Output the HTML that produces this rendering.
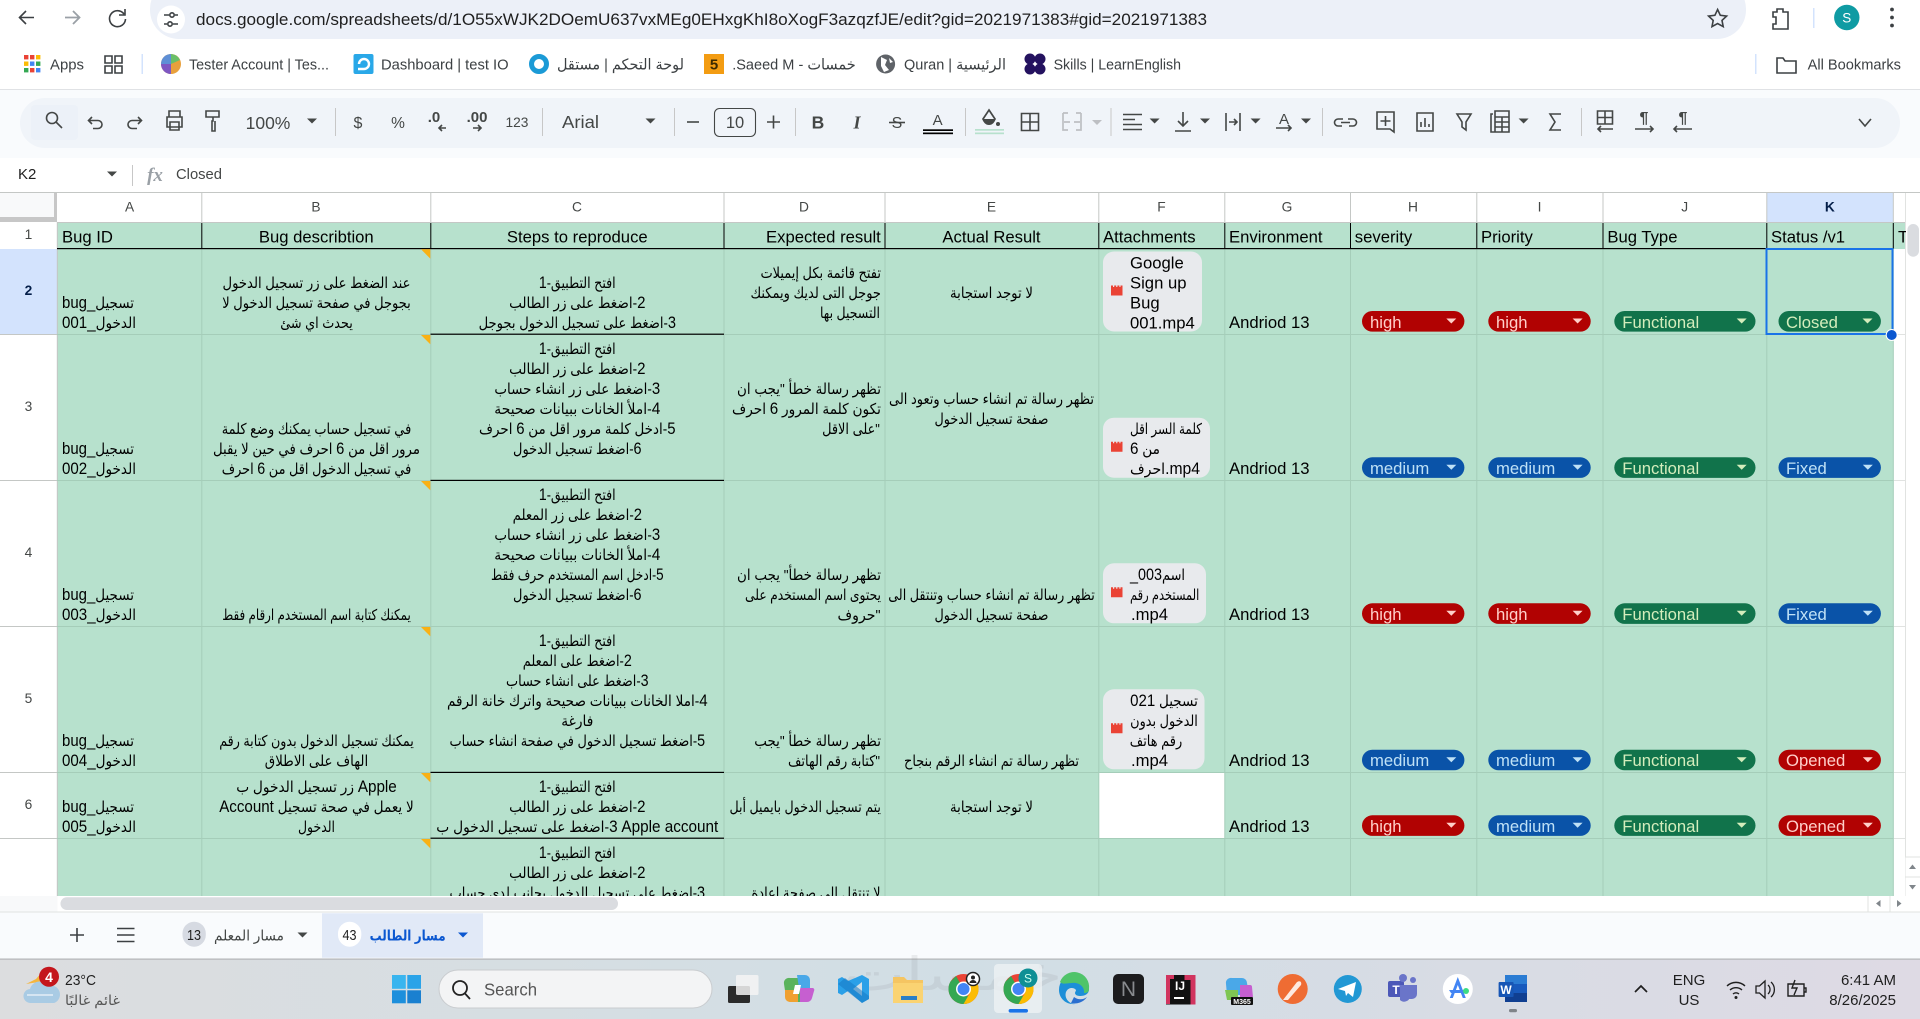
<!DOCTYPE html>
<html lang="en"><head><meta charset="utf-8"><title>Sheet</title>
<style>
html,body{margin:0;padding:0;background:#fff;overflow:hidden}
svg{display:block}
text{font-family:"Liberation Sans","DejaVu Sans",sans-serif;white-space:pre}
.c{font-size:16.67px;fill:#000}
.a{font-size:15px;fill:#000;direction:rtl;text-anchor:middle}
.l{font-size:15px;fill:#000;text-anchor:middle}
.n{font-size:16.67px}
.m{text-anchor:middle}
.h{font-size:13.75px;fill:#444746;text-anchor:middle}
.b{font-size:15px;fill:#3c4043}
.ti{font-size:15px;fill:#444746;text-anchor:middle}
.rd{font-size:16.67px;fill:#ffcfc9}.bl{font-size:16.67px;fill:#bfe1f6}.gr{font-size:16.67px;fill:#d4edbc}
.s{fill:none;stroke:#444746;stroke-width:1.6}
.sd{fill:none;stroke:#3c4043;stroke-width:1.6}
.k{fill:#444746}
</style></head><body>
<svg xmlns="http://www.w3.org/2000/svg" width="1920" height="1019" viewBox="0 0 1920 1019">
<defs>
<linearGradient id="tb" x1="0" x2="1" y1="0" y2="0"><stop offset="0" stop-color="#dcdddf"/><stop offset=".5" stop-color="#d1dee5"/><stop offset="1" stop-color="#dedae4"/></linearGradient>
<g id="R"><rect width="102.4" height="20.6" rx="10.3" fill="#b10202"/><path d="M84.3 7.5h10l-5 5z" fill="#ffcfc9"/></g>
<g id="B"><rect width="102.4" height="20.6" rx="10.3" fill="#0a53a8"/><path d="M84.3 7.5h10l-5 5z" fill="#bfe1f6"/></g>
<g id="G"><rect width="141.2" height="20.6" rx="10.3" fill="#11734b"/><path d="M122.4 7.5h10l-5 5z" fill="#d4edbc"/></g>
<g id="GS"><rect width="102.4" height="20.6" rx="10.3" fill="#11734b"/><path d="M84 7.5h10l-5 5z" fill="#d4edbc"/></g>
<g id="F"><path d="M0 1.5h11.5v8.5h-11.5z M0 0h2v2h-2z M3.2 0h2v2h-2z M6.4 0h2v2h-2z M9.5 0h2v2h-2z" fill="#ea4335"/></g>
<path id="C" d="M-5 -2.5h10l-5 5z" fill="#444746"/>
<g id="chrome">
<circle r="15" fill="#ea4335"/>
<path d="M-13 7.5A15 15 0 0 1 -13 -7.5L-7.5 -13 0 0 7.5 13A15 15 0 0 1 -13 7.5z" fill="#34a853"/>
<path d="M0 -7.5H13A15 15 0 0 1 0 15L7 3z" fill="#fbbc04"/>
<circle r="7.5" fill="#fff"/><circle r="6" fill="#4285f4"/>
</g>
</defs>

<!-- browser -->
<rect width="1920" height="1019" fill="#fff"/>
<rect x="150" y="-20" width="1596" height="59" rx="29" fill="#ecf0f8"/>
<path class="sd" d="M34 17.5H20M26 11l-6.5 6.5L26 24" stroke-width="1.8"/>
<path d="M65 17.5H79M73 11l6.5 6.5L73 24" fill="none" stroke="#9aa0a6" stroke-width="1.8"/>
<path class="sd" d="M124 14a8 8 0 1 0 1.5 5M125 9v6h-6" stroke-width="1.8"/>
<circle cx="171" cy="19.5" r="14" fill="#fff"/>
<path class="sd" d="M164 15h5M175 15h3M164 24h3M173 24h5"/><circle class="sd" cx="172" cy="15" r="2.2"/><circle class="sd" cx="170" cy="24" r="2.2"/>
<text x="196" y="25" font-size="16.67" fill="#1f1f1f" textLength="1011" lengthAdjust="spacingAndGlyphs">docs.google.com/spreadsheets/d/1O55xWJK2DOemU637vxMEg0EHxgKhI8oXogF3azqzfJE/edit?gid=2021971383#gid=2021971383</text>
<path class="sd" d="M1717.6 9.5l2.7 5.8 6.3.8-4.6 4.3 1.2 6.2-5.6-3.1-5.6 3.1 1.2-6.2-4.6-4.3 6.3-.8z" stroke-width="1.7"/>
<path class="sd" d="M1773 12h4v-3h6v3h5v17h-15v-5h3v-7h-3z" stroke-width="1.8"/>
<rect x="1813" y="8" width="1.5" height="20" fill="#d3e3fd"/>
<circle cx="1846.8" cy="17.5" r="12.7" fill="#0f9ba3"/><text x="1846.8" y="22.5" class="m" font-size="13.5" fill="#fff">S</text>
<circle cx="1892" cy="9.5" r="1.9" fill="#3c4043"/><circle cx="1892" cy="17.5" r="1.9" fill="#3c4043"/><circle cx="1892" cy="25.5" r="1.9" fill="#3c4043"/>

<!-- bookmarks -->
<g>
<rect x="24" y="55" width="4.4" height="4.4" fill="#ea4335"/><rect x="30" y="55" width="4.4" height="4.4" fill="#ea4335"/><rect x="36" y="55" width="4.4" height="4.4" fill="#fbbc04"/>
<rect x="24" y="61.5" width="4.4" height="4.4" fill="#fbbc04"/><rect x="30" y="61.5" width="4.4" height="4.4" fill="#4285f4"/><rect x="36" y="61.5" width="4.4" height="4.4" fill="#34a853"/>
<rect x="24" y="68" width="4.4" height="4.4" fill="#34a853"/><rect x="30" y="68" width="4.4" height="4.4" fill="#ea4335"/><rect x="36" y="68" width="4.4" height="4.4" fill="#4285f4"/>
<text x="50" y="69.5" class="b" textLength="34" lengthAdjust="spacingAndGlyphs">Apps</text>
<path class="sd" d="M105 56h7v7h-7zM115 56h7v7h-7zM105 66h7v7h-7zM115 66h7v7h-7z" stroke-width="1.7"/>
<rect x="141.5" y="54" width="1.5" height="20" fill="#d3e3fd"/>
<circle cx="171" cy="64" r="10" fill="#e8a03c"/><path d="M171 64V54a10 10 0 0 1 9 6z" fill="#6abf69"/><path d="M171 64v10a10 10 0 0 1-10-10z" fill="#7e57c2"/><path d="M171 64h-10a10 10 0 0 1 10-10z" fill="#5e8fd6"/>
<text x="189" y="69.5" class="b" textLength="140" lengthAdjust="spacingAndGlyphs">Tester Account | Tes...</text>
<rect x="353.5" y="54" width="20" height="20" rx="2" fill="#29a8e8"/><path d="M358 69h6a5 5 0 1 0-5-5" fill="none" stroke="#fff" stroke-width="2.4"/>
<text x="381" y="69.5" class="b" textLength="127.6" lengthAdjust="spacingAndGlyphs">Dashboard | test IO</text>
<ellipse cx="539" cy="64" rx="7.5" ry="7.5" fill="none" stroke="#1b9ad6" stroke-width="5"/>
<text x="620.5" y="69.5" class="b m" style="direction:rtl" textLength="127" lengthAdjust="spacingAndGlyphs">لوحة التحكم | مستقل</text>
<rect x="704" y="54" width="20" height="20" fill="#f39c12"/><text x="714" y="69.5" class="m" font-size="15" font-weight="700" fill="#3c2a00">5</text>
<text x="794" y="69.5" class="b m" style="direction:rtl" textLength="123.6" lengthAdjust="spacingAndGlyphs">خمسات - Saeed M.</text>
<circle cx="885.6" cy="64" r="9.5" fill="#5f6368"/><path d="M881 57l6 3-2 5 4 5-5 2-3-6zM889 58l4 4-3 1z" fill="#fff"/>
<text x="955" y="69.5" class="b m" style="direction:rtl" textLength="102" lengthAdjust="spacingAndGlyphs">الرئيسية | Quran</text>
<circle cx="1030" cy="59" r="5.5" fill="#24125f"/><circle cx="1040" cy="59" r="5.5" fill="#24125f"/><circle cx="1030" cy="69" r="5.5" fill="#24125f"/><circle cx="1040" cy="69" r="5.5" fill="#24125f"/>
<text x="1053.6" y="69.5" class="b" textLength="127.4" lengthAdjust="spacingAndGlyphs">Skills | LearnEnglish</text>
<rect x="1755" y="54" width="1.5" height="20" fill="#d3e3fd"/>
<path class="sd" d="M1777 58h6l2 3h11v12h-19z" stroke-width="1.7"/>
<text x="1807.6" y="69.5" class="b" textLength="93.4" lengthAdjust="spacingAndGlyphs">All Bookmarks</text>
</g>
<rect y="89" width="1920" height="1" fill="#e0e2e5"/>

<!-- toolbar -->
<rect y="90" width="1920" height="68" fill="#f9fbfd"/>
<rect x="20" y="98" width="1880" height="50" rx="25" fill="#f0f4f9"/>
<rect x="31" y="105" width="47" height="35" rx="4" fill="#ecf1f8"/>
<circle class="s" cx="52" cy="118" r="5.5"/><path class="s" d="M56 122l6 6" stroke-width="1.8"/>
<path class="s" d="M92 118l-3.5 3.5 3.5 3.5M88.5 121.5H98a4 4 0 0 1 0 8h-5" transform="translate(0,-1)"/>
<path class="s" d="M138 118l3.5 3.5-3.5 3.5M141.500 121.500H132a4 4 0 0 0 0 8h5" transform="translate(0,-1)"/>
<path class="s" d="M169 117v-6h11v6M167 127v-10h15v10zM170 122v8h9v-8z" stroke-width="1.8"/>
<path class="s" d="M206 111h13v6h-13zM213 117v4h-1v10h3v-10" stroke-width="1.8"/>
<text x="268" y="129" class="ti" style="font-size:17.5px">100%</text>
<use href="#C" x="312" y="121"/>
<rect x="335" y="108" width="1" height="28" fill="#c7c7c7"/>
<text x="358" y="128" class="ti" style="font-size:16px">$</text>
<text x="398" y="128" class="ti" style="font-size:15.500px">%</text>
<text x="434" y="122" class="ti" style="font-size:15px;font-weight:700">.0</text>
<path class="s" d="M446 128h-7M442 125l-3 3 3 3"/>
<text x="477" y="122" class="ti" style="font-size:15px;font-weight:700">.00</text>
<path class="s" d="M473 128h8M478 125l3 3-3 3"/>
<text x="517" y="127" class="ti" style="font-size:13.750px">123</text>
<rect x="542" y="108" width="1" height="28" fill="#c7c7c7"/>
<text x="562" y="128" style="font-size:17.500px;fill:#444746" textLength="37" lengthAdjust="spacingAndGlyphs">Arial</text>
<use href="#C" x="650.500" y="121"/>
<rect x="674" y="108" width="1" height="28" fill="#c7c7c7"/>
<path class="s" d="M687 122h12" stroke-width="1.8"/>
<rect x="714.500" y="108.500" width="41" height="28" rx="5" fill="none" stroke="#444746" stroke-width="1.100"/>
<text x="735" y="128" class="ti" style="font-size:16.500px">10</text>
<path class="s" d="M767 122h13M773.500 115.500v13" stroke-width="1.8"/>
<rect x="795" y="108" width="1" height="28" fill="#c7c7c7"/>
<text x="818" y="128.500" class="ti" style="font-size:17.500px;font-weight:700">B</text>
<text x="857" y="128.500" class="ti" style="font-size:18px;font-weight:700;font-style:italic;font-family:'Liberation Serif',serif">I</text>
<text x="897" y="128" class="ti" style="font-size:16px">S</text><path class="s" d="M889 122.500h16"/>
<text x="937.600" y="125" class="ti" style="font-size:15px">A</text>
<rect x="923" y="129.300" width="30" height="1.700" fill="#000"/><rect x="923" y="132.500" width="30" height="1.700" fill="#000"/>
<rect x="965" y="108" width="1" height="28" fill="#c7c7c7"/>
<path d="M989 110l6 9a6.500 6.500 0 0 1-12 0z" fill="none" stroke="#444746" stroke-width="1.7"/><path d="M983 119h12a6 6 0 0 1-12 0z" fill="#444746"/><circle cx="998" cy="124" r="2" fill="#444746"/>
<rect x="975" y="129" width="29" height="1.700" fill="#b7e1cd"/><rect x="975" y="132.500" width="29" height="1.700" fill="#b7e1cd"/>
<path class="s" d="M1021.500 113.500h17v17h-17zM1030 113.500v17M1021.500 122h17" stroke-width="1.7"/>
<path d="M1063 113h5M1076 113h5M1063 113v17h5M1081 113v17h-5M1064 122h6M1080 122h-6" fill="none" stroke="#bdbfc3" stroke-width="1.7"/>
<path d="M1092 120h10l-5 5z" fill="#bdbfc3"/>
<rect x="1110.500" y="108" width="1" height="28" fill="#c7c7c7"/>
<path class="s" d="M1123 114.500h19M1123 119.500h12M1123 124.500h19M1123 129.500h19" stroke-width="1.700"/>
<use href="#C" x="1154.600" y="121"/>
<path class="s" d="M1183 112v14M1178 121l5 5 5-5M1175 131h16" stroke-width="1.700"/>
<use href="#C" x="1205" y="121"/>
<path class="s" d="M1226 113v18M1240 113v18M1229 122h8M1234 119l3 3-3 3" stroke-width="1.700"/>
<use href="#C" x="1255.600" y="121"/>
<text x="1284" y="124" class="ti" style="font-size:15px">A</text><path class="s" d="M1276 128h15M1288 125l3 3-3 3"/>
<use href="#C" x="1306" y="121"/>
<rect x="1322" y="108" width="1" height="28" fill="#c7c7c7"/>
<path class="s" d="M1343 122h-5a3.500 3.500 0 0 0 0 7h4M1348 122h5a3.500 3.500 0 0 1 0 7h-4M1341 125.500h9" transform="translate(0,-3)" stroke-width="1.800"/>
<path class="s" d="M1377 112h17v20l-4-3h-13zM1385.500 116v10M1380.500 121h10" stroke-width="1.700"/>
<path class="s" d="M1417 113h16v18h-16zM1421 127v-5M1425 127v-9M1429 127v-3" stroke-width="1.700"/>
<path class="s" d="M1457 114h14l-5 8v8l-4-3v-5z" stroke-width="1.700"/>
<path class="s" d="M1493 114h-2v18h17M1495 111h14v21h-14zM1495 117h14M1495 122h14M1495 127h14M1502 117v15" stroke-width="1.700"/>
<use href="#C" x="1523.600" y="121"/>
<path class="s" d="M1561 114h-11l5 8-5 8h11" stroke-width="2.200"/>
<rect x="1581" y="108" width="1" height="28" fill="#c7c7c7"/>
<path class="s" d="M1597.500 111h15v13h-15zM1605 111v13M1597.500 117.500h15M1613 129h-15M1601 126l-3 3 3 3" stroke-width="1.700"/>
<text x="1644" y="123" class="ti" style="font-size:16px;font-weight:700">¶</text><path class="s" d="M1635 129h18M1650 126l3 3-3 3" stroke-width="1.700"/>
<text x="1683" y="123" class="ti" style="font-size:16px;font-weight:700">¶</text><path class="s" d="M1692 129h-18M1677 126l-3 3 3 3" stroke-width="1.700"/>
<path class="s" d="M1859 119l6 7 6-7" stroke-width="1.700"/>

<!-- formula bar -->
<text x="18" y="179" style="font-size:15px;fill:#1f1f1f">K2</text>
<use href="#C" x="112" y="174"/>
<rect x="132" y="165" width="1" height="21" fill="#c7c7c7"/>
<text x="155" y="181" class="m" style="font-size:19px;font-style:italic;font-weight:700;fill:#9aa0a6;font-family:'Liberation Serif',serif">fx</text>
<text x="176" y="179" style="font-size:15px;fill:#444746" textLength="46" lengthAdjust="spacingAndGlyphs">Closed</text>
<rect y="192" width="1920" height="1.300" fill="#c4c7c5"/>

<!-- grid base -->
<rect x="0" y="193" width="1905.500" height="703" fill="#fff"/>
<rect x="0" y="193" width="54" height="24" fill="#f8f9fa"/>
<path d="M54 193h3v29H0v-5h54z" fill="#c7c7c7"/>
<rect x="57" y="222" width="1836" height="674" fill="#b7e1cd"/>
<rect x="1893" y="222" width="12.500" height="27" fill="#b7e1cd"/>
<rect x="1766.600" y="193" width="126.400" height="29" fill="#d3e3fd"/>
<rect x="0" y="249" width="57" height="85.300" fill="#d3e3fd"/>
<rect x="1098.500" y="773" width="126" height="65" fill="#fff"/>

<g fill="#c4c7c5">
<rect x="201.300" y="193" width="1" height="29"/><rect x="430.300" y="193" width="1" height="29"/><rect x="723.500" y="193" width="1" height="29"/><rect x="884.500" y="193" width="1" height="29"/><rect x="1098.300" y="193" width="1" height="29"/><rect x="1224.300" y="193" width="1" height="29"/><rect x="1350" y="193" width="1" height="29"/><rect x="1476.300" y="193" width="1" height="29"/><rect x="1602.500" y="193" width="1" height="29"/><rect x="1766.300" y="193" width="1" height="29"/><rect x="1892.800" y="193" width="1" height="29"/>
<rect x="57" y="222" width="1848.500" height="1"/>
<rect x="56.800" y="222" width="1.100" height="674"/>
<rect x="0" y="334" width="57" height="1"/><rect x="0" y="480" width="57" height="1"/><rect x="0" y="626" width="57" height="1"/><rect x="0" y="772" width="57" height="1"/><rect x="0" y="838" width="57" height="1"/>
</g>
<g fill="#e1e3e1">
<rect x="1893" y="334" width="12.500" height="1"/><rect x="1893" y="480" width="12.500" height="1"/><rect x="1893" y="626" width="12.500" height="1"/><rect x="1893" y="772" width="12.500" height="1"/><rect x="1893" y="838" width="12.500" height="1"/>
<rect x="1905" y="193" width="1" height="703"/>
</g>
<g fill="#a5cdb9">
<rect x="201.300" y="249" width="1" height="647"/><rect x="430.300" y="249" width="1" height="647"/><rect x="723.500" y="249" width="1" height="647"/><rect x="884.500" y="249" width="1" height="647"/><rect x="1098.300" y="249" width="1" height="647"/><rect x="1224.300" y="249" width="1" height="647"/><rect x="1350" y="249" width="1" height="647"/><rect x="1476.300" y="249" width="1" height="647"/><rect x="1602.500" y="249" width="1" height="647"/><rect x="1766.300" y="249" width="1" height="647"/><rect x="1892.800" y="222" width="1" height="674"/>
<rect x="57" y="334" width="1836" height="1"/><rect x="57" y="480" width="1836" height="1"/><rect x="57" y="626" width="1836" height="1"/><rect x="57" y="772" width="1836" height="1"/><rect x="57" y="838" width="1836" height="1"/>
</g>
<g fill="#000">
<rect x="201.300" y="223" width="1" height="26"/><rect x="430.300" y="223" width="1" height="26"/><rect x="723.500" y="223" width="1" height="26"/><rect x="884.500" y="223" width="1" height="26"/><rect x="1098.300" y="223" width="1" height="26"/><rect x="1224.300" y="223" width="1" height="26"/><rect x="1350" y="223" width="1" height="26"/><rect x="1476.300" y="223" width="1" height="26"/><rect x="1602.500" y="223" width="1" height="26"/><rect x="1766.300" y="223" width="1" height="26"/><rect x="1892.800" y="223" width="1" height="26"/>
<rect x="57" y="248" width="1836" height="1.200"/>
<rect x="430.500" y="333.600" width="293.500" height="1.200"/><rect x="430.500" y="479.800" width="293.500" height="1.200"/><rect x="430.500" y="771.800" width="293.500" height="1.200"/><rect x="430.500" y="837.600" width="293.500" height="1.200"/>
</g>
<g fill="#f9b115">
<path d="M421 249.300h9.300v9.300z"/><path d="M421 335h9.300v9.300z"/><path d="M421 481h9.300v9.300z"/><path d="M421 627h9.300v9.300z"/><path d="M421 773h9.300v9.300z"/><path d="M421 839h9.300v9.300z"/>
</g>

<!-- column letters -->
<text class="h" x="129.600" y="211.700">A</text><text class="h" x="316" y="211.700">B</text><text class="h" x="577" y="211.700">C</text><text class="h" x="804" y="211.700">D</text><text class="h" x="991.500" y="211.700">E</text><text class="h" x="1161.500" y="211.700">F</text><text class="h" x="1287" y="211.700">G</text><text class="h" x="1413" y="211.700">H</text><text class="h" x="1539.600" y="211.700">I</text><text class="h" x="1684.700" y="211.700">J</text><text class="h" x="1829.800" y="211.700" style="font-weight:700;fill:#041e49">K</text>
<!-- row numbers -->
<text class="h" x="28.500" y="239">1</text><text class="h" x="28.500" y="295" style="font-weight:700;fill:#041e49">2</text><text class="h" x="28.500" y="411">3</text><text class="h" x="28.500" y="557">4</text><text class="h" x="28.500" y="703">5</text><text class="h" x="28.500" y="809">6</text>

<!-- header row -->
<text class="c" x="62" y="242.500">Bug ID</text>
<text class="c m" x="316.300" y="242.500">Bug describtion</text>
<text class="c m" x="577.300" y="242.500">Steps to reproduce</text>
<text class="c" x="766" y="242.500">Expected result</text>
<text class="c m" x="991.500" y="242.500">Actual Result</text>
<text class="c" x="1103" y="242.500">Attachments</text>
<text class="c" x="1229" y="242.500">Environment</text>
<text class="c" x="1354.800" y="242.500">severity</text>
<text class="c" x="1481" y="242.500">Priority</text>
<text class="c" x="1607.400" y="242.500">Bug Type</text>
<text class="c" x="1771" y="242.500">Status /v1</text>
<text class="c" x="1898" y="242.500">T</text>

<!-- column A -->
<text class="l" x="98" y="308" textLength="72" lengthAdjust="spacingAndGlyphs"><tspan class="n">bug_</tspan>تسجيل</text>
<text class="l" x="99" y="328" textLength="74" lengthAdjust="spacingAndGlyphs"><tspan class="n">001_</tspan>الدخول</text>
<text class="l" x="98" y="454" textLength="72" lengthAdjust="spacingAndGlyphs"><tspan class="n">bug_</tspan>تسجيل</text>
<text class="l" x="99" y="474" textLength="74" lengthAdjust="spacingAndGlyphs"><tspan class="n">002_</tspan>الدخول</text>
<text class="l" x="98" y="600" textLength="72" lengthAdjust="spacingAndGlyphs"><tspan class="n">bug_</tspan>تسجيل</text>
<text class="l" x="99" y="620" textLength="74" lengthAdjust="spacingAndGlyphs"><tspan class="n">003_</tspan>الدخول</text>
<text class="l" x="98" y="746" textLength="72" lengthAdjust="spacingAndGlyphs"><tspan class="n">bug_</tspan>تسجيل</text>
<text class="l" x="99" y="766" textLength="74" lengthAdjust="spacingAndGlyphs"><tspan class="n">004_</tspan>الدخول</text>
<text class="l" x="98" y="812" textLength="72" lengthAdjust="spacingAndGlyphs"><tspan class="n">bug_</tspan>تسجيل</text>
<text class="l" x="99" y="832" textLength="74" lengthAdjust="spacingAndGlyphs"><tspan class="n">005_</tspan>الدخول</text>

<!-- column B -->
<text class="a" x="316.500" y="288" textLength="188" lengthAdjust="spacingAndGlyphs">عند الضغط على زر تسجيل الدخول</text>
<text class="a" x="316.500" y="308" textLength="188.600" lengthAdjust="spacingAndGlyphs">بجوجل في صفحة تسجيل الدخول لا</text>
<text class="a" x="316.500" y="328" textLength="72.600" lengthAdjust="spacingAndGlyphs">يحدث اي شئ</text>
<text class="a" x="316.500" y="434" textLength="189.500" lengthAdjust="spacingAndGlyphs">في تسجيل حساب يمكنك وضع كلمة</text>
<text class="a" x="316.500" y="454" textLength="207" lengthAdjust="spacingAndGlyphs">مرور اقل من <tspan class="n">6</tspan> احرف في حين لا يقبل</text>
<text class="a" x="316.500" y="474" textLength="189.500" lengthAdjust="spacingAndGlyphs">في تسجيل الدخول اقل من <tspan class="n">6</tspan> احرف</text>
<text class="a" x="316.500" y="620" textLength="188.600" lengthAdjust="spacingAndGlyphs">يمكنك كتابة اسم المستخدم ارقام فقط</text>
<text class="a" x="316.500" y="746" textLength="194.600" lengthAdjust="spacingAndGlyphs">يمكنك تسجيل الدخول بدون كتابة رقم</text>
<text class="a" x="316.500" y="766" textLength="103.400" lengthAdjust="spacingAndGlyphs">الهاف على الاطلاق</text>
<text class="a" x="316.500" y="792" textLength="160.600" lengthAdjust="spacingAndGlyphs"><tspan class="n">Apple</tspan> زر تسجيل الدخول ب</text>
<text class="a" x="316.500" y="812" textLength="194.600" lengthAdjust="spacingAndGlyphs">لا يعمل في صحة تسجيل <tspan class="n">Account</tspan></text>
<text class="a" x="316.500" y="832" textLength="37" lengthAdjust="spacingAndGlyphs">الدخول</text>

<!-- column C -->
<text class="a" x="577.300" y="288" textLength="76.800" lengthAdjust="spacingAndGlyphs">افتح التطبيق-<tspan class="n">1</tspan></text>
<text class="a" x="577.300" y="308" textLength="136.400" lengthAdjust="spacingAndGlyphs"><tspan class="n">2</tspan>-اضغط على زر الطالب</text>
<text class="a" x="577.300" y="328" textLength="197.400" lengthAdjust="spacingAndGlyphs"><tspan class="n">3</tspan>-اضغط على تسجيل الدخول بجوجل</text>

<text class="a" x="577.300" y="354" textLength="76.800" lengthAdjust="spacingAndGlyphs">افتح التطبيق-<tspan class="n">1</tspan></text>
<text class="a" x="577.300" y="374" textLength="136.400" lengthAdjust="spacingAndGlyphs"><tspan class="n">2</tspan>-اضغط على زر الطالب</text>
<text class="a" x="577.300" y="394" textLength="165.800" lengthAdjust="spacingAndGlyphs"><tspan class="n">3</tspan>-اضغط على زر انشاء حساب</text>
<text class="a" x="577.300" y="414" textLength="166" lengthAdjust="spacingAndGlyphs"><tspan class="n">4</tspan>-املأ الخانات ببيانات صحيحة</text>
<text class="a" x="577.300" y="434" textLength="196.500" lengthAdjust="spacingAndGlyphs"><tspan class="n">5</tspan>-ادخل كلمة مرور اقل من <tspan class="n">6</tspan> احرف</text>
<text class="a" x="577.300" y="454" textLength="128.500" lengthAdjust="spacingAndGlyphs"><tspan class="n">6</tspan>-اضغط تسجيل الدخول</text>

<text class="a" x="577.300" y="500" textLength="76.800" lengthAdjust="spacingAndGlyphs">افتح التطبيق-<tspan class="n">1</tspan></text>
<text class="a" x="577.300" y="520" textLength="129.400" lengthAdjust="spacingAndGlyphs"><tspan class="n">2</tspan>-اضغط على زر المعلم</text>
<text class="a" x="577.300" y="540" textLength="165.800" lengthAdjust="spacingAndGlyphs"><tspan class="n">3</tspan>-اضغط على زر انشاء حساب</text>
<text class="a" x="577.300" y="560" textLength="166" lengthAdjust="spacingAndGlyphs"><tspan class="n">4</tspan>-املأ الخانات ببيانات صحيحة</text>
<text class="a" x="577.300" y="580" textLength="172.700" lengthAdjust="spacingAndGlyphs"><tspan class="n">5</tspan>-ادخل اسم المستخدم حرف فقط</text>
<text class="a" x="577.300" y="600" textLength="128.500" lengthAdjust="spacingAndGlyphs"><tspan class="n">6</tspan>-اضغط تسجيل الدخول</text>

<text class="a" x="577.300" y="646" textLength="76.800" lengthAdjust="spacingAndGlyphs">افتح التطبيق-<tspan class="n">1</tspan></text>
<text class="a" x="577.300" y="666" textLength="109" lengthAdjust="spacingAndGlyphs"><tspan class="n">2</tspan>-اضغط على المعلم</text>
<text class="a" x="577.300" y="686" textLength="142.500" lengthAdjust="spacingAndGlyphs"><tspan class="n">3</tspan>-اضغط على انشاء حساب</text>
<text class="a" x="577.300" y="706" textLength="260.700" lengthAdjust="spacingAndGlyphs"><tspan class="n">4</tspan>-املا الخانات ببيانات صحيحة واترك خانة الرقم</text>
<text class="a" x="577.300" y="726" textLength="32" lengthAdjust="spacingAndGlyphs">فارغة</text>
<text class="a" x="577.300" y="746" textLength="255.600" lengthAdjust="spacingAndGlyphs"><tspan class="n">5</tspan>-اضغط تسجيل الدخول في صفحة انشاء حساب</text>

<text class="a" x="577.300" y="792" textLength="76.800" lengthAdjust="spacingAndGlyphs">افتح التطبيق-<tspan class="n">1</tspan></text>
<text class="a" x="577.300" y="812" textLength="136.400" lengthAdjust="spacingAndGlyphs"><tspan class="n">2</tspan>-اضغط على زر الطالب</text>
<text class="a" x="577.300" y="832" textLength="282" lengthAdjust="spacingAndGlyphs"><tspan class="n">Apple account</tspan>&#8207; <tspan class="n">3</tspan>-اضغط على تسجيل الدخول ب</text>

<text class="a" x="577.300" y="858" textLength="76.800" lengthAdjust="spacingAndGlyphs">افتح التطبيق-<tspan class="n">1</tspan></text>
<text class="a" x="577.300" y="878" textLength="136.400" lengthAdjust="spacingAndGlyphs"><tspan class="n">2</tspan>-اضغط على زر الطالب</text>
<text class="a" x="577.300" y="898" textLength="255.600" lengthAdjust="spacingAndGlyphs"><tspan class="n">3</tspan>-اضغط على تسجيل الدخول بجانب لدى حساب</text>

<!-- column D -->
<text class="a" x="820.700" y="278" textLength="120.500" lengthAdjust="spacingAndGlyphs">تفتح قائمة بكل إيميلات</text>
<text class="a" x="815.700" y="298" textLength="130.500" lengthAdjust="spacingAndGlyphs">جوجل التى لديك ويمكنك</text>
<text class="a" x="850" y="318" textLength="60" lengthAdjust="spacingAndGlyphs">التسجيل بها</text>
<text class="a" x="809" y="394" textLength="143.900" lengthAdjust="spacingAndGlyphs">تظهر رسالة خطأ "يجب ان</text>
<text class="a" x="806.500" y="414" textLength="148.900" lengthAdjust="spacingAndGlyphs">تكون كلمة المرور <tspan class="n">6</tspan> احرف</text>
<text class="a" x="851" y="434" textLength="57.800" lengthAdjust="spacingAndGlyphs">"على الاقل</text>
<text class="a" x="809" y="580" textLength="143.900" lengthAdjust="spacingAndGlyphs">تظهر رسالة خطأ" يجب ان</text>
<text class="a" x="813" y="600" textLength="136" lengthAdjust="spacingAndGlyphs">يحتوى اسم المستخدم على</text>
<text class="a" x="859" y="620" textLength="43" lengthAdjust="spacingAndGlyphs">"حروف</text>
<text class="a" x="817.600" y="746" textLength="126.700" lengthAdjust="spacingAndGlyphs">تظهر رسالة خطأ "يجب</text>
<text class="a" x="834" y="766" textLength="92" lengthAdjust="spacingAndGlyphs">"كتابة رقم الهاتف</text>
<text class="a" x="805.200" y="812" textLength="151.500" lengthAdjust="spacingAndGlyphs">يتم تسجيل الدخول بايميل أبل</text>
<text class="a" x="816" y="898" textLength="129" lengthAdjust="spacingAndGlyphs">لا تنتقل الى صفحة اعادة</text>

<!-- column E -->
<text class="a" x="991.500" y="298" textLength="83" lengthAdjust="spacingAndGlyphs">لا توجد استجابة</text>
<text class="a" x="991.500" y="404" textLength="205" lengthAdjust="spacingAndGlyphs">تظهر رسالة تم انشاء حساب وتعود الى</text>
<text class="a" x="991.500" y="424" textLength="114" lengthAdjust="spacingAndGlyphs">صفحة تسجيل الدخول</text>
<text class="a" x="991.500" y="600" textLength="206.600" lengthAdjust="spacingAndGlyphs">تظهر رسالة تم انشاء حساب وتنتقل الى</text>
<text class="a" x="991.500" y="620" textLength="114" lengthAdjust="spacingAndGlyphs">صفحة تسجيل الدخول</text>
<text class="a" x="991.500" y="766" textLength="175" lengthAdjust="spacingAndGlyphs">تظهر رسالة تم انشاء الرقم بنجاح</text>
<text class="a" x="991.500" y="812" textLength="83" lengthAdjust="spacingAndGlyphs">لا توجد استجابة</text>

<!-- column F chips -->
<rect x="1103" y="251.500" width="99" height="80" rx="11" fill="#e8eaed"/>
<use href="#F" x="1111" y="285.500"/>
<text class="c" x="1130" y="268.500">Google</text><text class="c" x="1130" y="288.500">Sign up</text><text class="c" x="1130" y="308.500">Bug</text><text class="c" x="1130" y="328.500">001.mp4</text>

<rect x="1103" y="417.700" width="107" height="60" rx="11" fill="#e8eaed"/>
<use href="#F" x="1111" y="441.700"/>
<text class="a" x="1166" y="434" textLength="72" lengthAdjust="spacingAndGlyphs">كلمة السر اقل</text>
<text class="l" x="1145" y="454" textLength="30" lengthAdjust="spacingAndGlyphs"><tspan class="n">6</tspan> من</text>
<text class="l" x="1165" y="474" textLength="70" lengthAdjust="spacingAndGlyphs">احرف<tspan class="n">.mp4</tspan></text>

<rect x="1103" y="563.300" width="103" height="60" rx="11" fill="#e8eaed"/>
<use href="#F" x="1111" y="587.300"/>
<text class="l" x="1157.500" y="580" textLength="55" lengthAdjust="spacingAndGlyphs"><tspan class="n">_003</tspan>اسم</text>
<text class="a" x="1164.700" y="600" textLength="69.300" lengthAdjust="spacingAndGlyphs">المستخدم رقم</text>
<text class="c" x="1131" y="620">.mp4</text>

<rect x="1103" y="689.300" width="101.500" height="80" rx="11" fill="#e8eaed"/>
<use href="#F" x="1111" y="723.300"/>
<text class="l" x="1164" y="706" textLength="67.700" lengthAdjust="spacingAndGlyphs"><tspan class="n">021</tspan> تسجيل</text>
<text class="a" x="1164" y="726" textLength="67.700" lengthAdjust="spacingAndGlyphs">الدخول بدون</text>
<text class="a" x="1156" y="746" textLength="52.400" lengthAdjust="spacingAndGlyphs">رقم هاتف</text>
<text class="c" x="1131" y="766">.mp4</text>

<!-- column G -->
<text class="c" x="1229" y="328">Andriod 13</text><text class="c" x="1229" y="474">Andriod 13</text><text class="c" x="1229" y="620">Andriod 13</text><text class="c" x="1229" y="766">Andriod 13</text><text class="c" x="1229" y="832">Andriod 13</text>

<!-- dropdown chips -->
<use href="#R" x="1362" y="311"/><text class="rd" x="1370" y="328">high</text>
<use href="#R" x="1488.300" y="311"/><text class="rd" x="1496" y="328">high</text>
<use href="#G" x="1614.300" y="311"/><text class="gr" x="1622.300" y="328">Functional</text>
<use href="#GS" x="1778.500" y="311"/><text class="gr" x="1786" y="328">Closed</text>

<use href="#B" x="1362" y="457.300"/><text class="bl" x="1370" y="474">medium</text>
<use href="#B" x="1488.300" y="457.300"/><text class="bl" x="1496" y="474">medium</text>
<use href="#G" x="1614.300" y="457.300"/><text class="gr" x="1622.300" y="474">Functional</text>
<use href="#B" x="1778.500" y="457.300"/><text class="bl" x="1786" y="474">Fixed</text>

<use href="#R" x="1362" y="603.300"/><text class="rd" x="1370" y="620">high</text>
<use href="#R" x="1488.300" y="603.300"/><text class="rd" x="1496" y="620">high</text>
<use href="#G" x="1614.300" y="603.300"/><text class="gr" x="1622.300" y="620">Functional</text>
<use href="#B" x="1778.500" y="603.300"/><text class="bl" x="1786" y="620">Fixed</text>

<use href="#B" x="1362" y="749.700"/><text class="bl" x="1370" y="766">medium</text>
<use href="#B" x="1488.300" y="749.700"/><text class="bl" x="1496" y="766">medium</text>
<use href="#G" x="1614.300" y="749.700"/><text class="gr" x="1622.300" y="766">Functional</text>
<use href="#R" x="1778.500" y="749.700"/><text class="rd" x="1786" y="766">Opened</text>

<use href="#R" x="1362" y="815.300"/><text class="rd" x="1370" y="832">high</text>
<use href="#B" x="1488.300" y="815.300"/><text class="bl" x="1496" y="832">medium</text>
<use href="#G" x="1614.300" y="815.300"/><text class="gr" x="1622.300" y="832">Functional</text>
<use href="#R" x="1778.500" y="815.300"/><text class="rd" x="1786" y="832">Opened</text>

<!-- selection -->
<rect x="1766.500" y="249" width="126" height="85" fill="none" stroke="#1a73e8" stroke-width="2"/>
<circle cx="1891.700" cy="335" r="5.500" fill="#0b57d0" stroke="#fff" stroke-width="1"/>

<!-- v-scrollbar -->
<rect x="1906" y="193" width="14" height="703" fill="#fff"/>
<rect x="1907.400" y="224" width="11.600" height="32.700" rx="5.800" fill="#dadce0"/>
<rect x="1905.500" y="857" width="14.500" height="39" fill="#fff"/>
<path d="M1905.500 857h14.500M1905.500 877h14.500" stroke="#e1e3e1" fill="none"/>
<path d="M1909 869l3.500-4.500 3.500 4.500z" fill="#80868b"/><path d="M1909 885l3.500 4.500 3.500-4.500z" fill="#80868b"/>

<!-- h-scrollbar -->
<rect x="0" y="896" width="1920" height="16" fill="#fff"/>
<rect x="0" y="896" width="57.500" height="16" fill="#f8f9fa"/>
<rect x="60.500" y="897.300" width="557.500" height="12.700" rx="6.300" fill="#dadce0"/>
<path d="M1868 896v16M1890 896v16" stroke="#e1e3e1" fill="none"/>
<path d="M1880.500 900v7l-4.500-3.500z" fill="#80868b"/><path d="M1897 900v7l4.500-3.500z" fill="#80868b"/>

<!-- sheet tabs -->
<rect x="0" y="912" width="1920" height="47" fill="#f9fbfd"/>
<rect x="0" y="911.500" width="1920" height="1" fill="#e1e3e1"/>
<path class="sd" d="M70 935h14M77 928v14" stroke-width="2"/>
<path class="sd" d="M117 928.500h17.500M117 935h17.500M117 941.500h17.500" stroke-width="1.800"/>
<rect x="182.500" y="921.700" width="23.300" height="25" rx="11.600" fill="#d6dae2"/>
<text x="194" y="940" class="m" font-size="15" fill="#1f1f1f" textLength="14" lengthAdjust="spacingAndGlyphs">13</text>
<text x="249" y="940.500" class="a" style="fill:#444746;font-size:14.500px" textLength="70" lengthAdjust="spacingAndGlyphs">مسار المعلم</text>
<use href="#C" x="302.500" y="935"/>
<rect x="322" y="913.300" width="161" height="44.400" fill="#e1e9f7"/>
<rect x="338" y="921.700" width="23.300" height="25" rx="11.600" fill="#fff"/>
<text x="349.500" y="940" class="m" font-size="15" fill="#1f1f1f" textLength="14" lengthAdjust="spacingAndGlyphs">43</text>
<text x="407.600" y="940.500" class="a" style="fill:#0b57d0;font-size:14.500px;font-weight:700" textLength="76" lengthAdjust="spacingAndGlyphs">مسار الطالب</text>
<path d="M458 932.500h10l-5 5z" fill="#0b57d0"/>

<!-- taskbar -->
<rect x="0" y="959" width="1920" height="60" fill="url(#tb)"/>
<rect x="0" y="958.500" width="1920" height="1.200" fill="#b3b5b7"/>
<text x="953" y="990" class="a" style="font-size:46px;fill:#7d7d7d;opacity:.12" textLength="219" lengthAdjust="spacingAndGlyphs">خمسات</text>

<!-- weather -->
<path d="M26 984l10-5 6-7 3 9z" fill="#f4b63f"/>
<path d="M31 1003a7 7 0 0 1-1-14 10 10 0 0 1 18-3 8 8 0 0 1 6 17z" fill="#a9cbe4"/><path d="M27 995h26" stroke="#e4eef6" stroke-width="1.500"/>
<circle cx="49" cy="976.700" r="10" fill="#c4161c"/><text x="49" y="982" class="m" font-size="14" font-weight="700" fill="#fff">4</text>
<text x="65" y="985" font-size="15" fill="#1f1f1f" textLength="31" lengthAdjust="spacingAndGlyphs">23°C</text>
<text x="92.500" y="1005" class="a" style="font-size:13.500px;fill:#555" textLength="55" lengthAdjust="spacingAndGlyphs">غائم غالبًا</text>

<!-- start -->
<path d="M392 975h13.800v13.800H392z" fill="#39b5ef"/><path d="M407.300 975H421v13.800h-13.700z" fill="#2aa3e8"/><path d="M392 990.300h13.800v13H392z" fill="#1d8fdc"/><path d="M407.300 990.300H421v13h-13.700z" fill="#1a80d0"/>

<!-- search -->
<rect x="439" y="970" width="273" height="38" rx="19" fill="#f3f4f5" stroke="#c9cccf"/>
<circle cx="460" cy="988" r="7" fill="none" stroke="#222" stroke-width="1.800"/><path d="M465 993.500l5 5.500" stroke="#222" stroke-width="1.800"/>
<text x="484" y="995.500" font-size="17.500" fill="#555" textLength="53" lengthAdjust="spacingAndGlyphs">Search</text>

<!-- taskbar icons -->
<rect x="728" y="986" width="22" height="17" rx="1.500" fill="#2b2b2b"/><rect x="736" y="975" width="22.500" height="20" rx="1.500" fill="#f4f4f5" opacity=".85"/>
<path d="M790 978h10a5 5 0 0 1 5 5l2 12a6 6 0 0 1-6 7h-10a5 5 0 0 1-5-5l-2-13a5 5 0 0 1 6-6z" fill="#5ab35c"/><path d="M797 975h8a5 5 0 0 1 5 5v8h-11z" fill="#4aa8e8"/><path d="M800 988h13a2 2 0 0 1 1 3l-2 7a5 5 0 0 1-5 4h-7z" fill="#c65fd0"/><path d="M785 990h13v12h-8a5 5 0 0 1-5-5z" fill="#f0a030"/><path d="M795 985h6l-2 9h-6z" fill="#fff"/>
<path d="M862 975l7 4v20l-7 4-14-12-6 4-4-2v-14l4-2 6 4z" fill="#2aa0e8"/><path d="M862 982v14l-9-7z" fill="#d3dfe6"/><path d="M838 984l24 19 7-4v-3l-24-18z" fill="#1579c2" opacity=".55"/>
<path d="M893 977h11l3 3h16v23h-30z" fill="#f5c562"/><rect x="893" y="983" width="30" height="20" fill="#fad372"/><rect x="901" y="996" width="16" height="4" fill="#2a7fc6"/>
<use href="#chrome" x="963.500" y="989"/>
<circle cx="973" cy="979" r="6.500" fill="#fff" stroke="#222" stroke-width="1.500"/><circle cx="973" cy="977.500" r="2" fill="#222"/><path d="M969.500 983a3.500 3 0 0 1 7 0" fill="#222"/>
<rect x="994" y="964" width="48" height="49" rx="4" fill="#eef1f4" opacity=".8"/>
<use href="#chrome" x="1018.500" y="989"/>
<circle cx="1028" cy="978" r="9.500" fill="#0f8f95"/><text x="1028" y="982.500" class="m" font-size="12" fill="#cfe">S</text>
<rect x="1008.600" y="1009" width="19.400" height="3.600" rx="1.800" fill="#1a73e8"/>
<path d="M1059 990a15 15 0 0 1 30-1c0 5-4 7-9 7-4 0-5-2-5-3s1-2 1-3c-2-3-8-3-10 2-2 6 3 12 9 12-8 1-16-5-16-14z" fill="#1c8fd8"/><path d="M1060 982a15 15 0 0 1 29 7c0 3-2 4-5 4 1-6-5-11-12-10-5 0-9 2-12-1z" fill="#4fc46a"/><path d="M1071 1003a15 15 0 0 0 16-6c-4 3-9 3-13 0z" fill="#2a6fd0"/>
<rect x="1113" y="974" width="31" height="30" rx="5" fill="#1c1c1e"/><text x="1128.500" y="996" class="m" font-size="21" fill="#888a8e">N</text>
<rect x="1166" y="975" width="29.500" height="29.500" fill="#111"/><path d="M1166 975h8v4h-4v25h-4zM1195.500 975v29.500h-5V980h-6v-5z" fill="#d1345f"/><text x="1175" y="990" font-size="12" font-weight="700" fill="#fff">IJ</text><rect x="1174" y="997" width="10" height="2" fill="#fff"/>
<path d="M1232 978h10a5 5 0 0 1 5 5l2 12h-22l-1-11a5 5 0 0 1 6-6z" fill="#4aa8e8"/><path d="M1225 990h13v10h-11z" fill="#7fc653"/><path d="M1240 985h10a2 2 0 0 1 2 2l1 10h-13z" fill="#c65fd0"/>
<rect x="1231" y="997" width="22" height="8" rx="1" fill="#111"/><text x="1242" y="1004" class="m" font-size="7" font-weight="700" fill="#fff">M365</text>
<circle cx="1292.700" cy="989" r="15" fill="#ef6c33"/><path d="M1283 1000l14-18c3-2 5 0 4 3l-13 15z" fill="#fff" opacity=".85"/>
<circle cx="1347.800" cy="989" r="14" fill="#2298d4"/><path d="M1338 989l18-7-3 15-5-4-2 3-1-5z" fill="#fff"/>
<rect x="1388" y="981" width="16" height="16" rx="2" fill="#4c58b8"/><text x="1396" y="994" class="m" font-size="12" font-weight="700" fill="#fff">T</text><circle cx="1403" cy="978" r="4" fill="#6a75c9"/><circle cx="1413" cy="980" r="3" fill="#6a75c9"/><path d="M1404 985h13v9a5 5 0 0 1-5 5h-8z" fill="#6a75c9"/><path d="M1400 985h10v12a6 6 0 0 1-10 3z" fill="#6a75c9"/>
<circle cx="1457.800" cy="989" r="15" fill="#fff"/><path d="M1457.800 977l8 21h-3l-5-13-5 13h-3z" fill="#4285f4"/><path d="M1449 990h18l-2 3h-14z" fill="#4285f4"/><circle cx="1466" cy="991" r="3" fill="#3ddc84"/>
<rect x="1505" y="975" width="22" height="27" fill="#2b7cd3"/><rect x="1505" y="984" width="22" height="9" fill="#185abd"/><rect x="1505" y="993" width="22" height="9" fill="#103f91"/><rect x="1498.600" y="982" width="15" height="15" rx="1" fill="#1756b5"/><text x="1506" y="994" class="m" font-size="12" font-weight="700" fill="#fff">W</text>
<rect x="1509" y="1009" width="8" height="3.200" rx="1.600" fill="#7f8489"/>

<!-- tray -->
<path d="M1635 992l6-6 6 6" fill="none" stroke="#1f1f1f" stroke-width="1.700"/>
<text x="1689" y="985" class="m" font-size="15" fill="#1f1f1f">ENG</text><text x="1689" y="1005" class="m" font-size="15" fill="#1f1f1f">US</text>
<path d="M1727 986a13 13 0 0 1 18 0M1730 990a9 9 0 0 1 12 0M1733 994a4.500 4.500 0 0 1 6 0" fill="none" stroke="#1f1f1f" stroke-width="1.400"/><circle cx="1736" cy="997.500" r="1.500" fill="#1f1f1f"/>
<path d="M1756 986h3.500l5.500-5v17l-5.500-5H1756zM1768 985a6 6 0 0 1 0 9M1771 982a10 10 0 0 1 0 15" fill="none" stroke="#1f1f1f" stroke-width="1.300"/>
<path d="M1788 984h16v12h-16zM1804 988h2v4h-2M1795 980l-3 8h5l-3 7" fill="none" stroke="#1f1f1f" stroke-width="1.400"/>
<text x="1896" y="985" text-anchor="end" font-size="15" fill="#1f1f1f">6:41 AM</text>
<text x="1896" y="1005" text-anchor="end" font-size="15" fill="#1f1f1f">8/26/2025</text>
</svg>
</body></html>
